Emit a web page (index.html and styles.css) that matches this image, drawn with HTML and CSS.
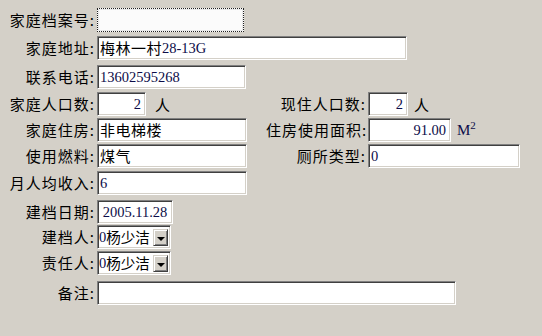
FILE: index.html
```html
<!DOCTYPE html>
<html lang="zh-CN">
<head>
<meta charset="utf-8">
<title>家庭档案</title>
<link rel="stylesheet" href="styles.css">
</head>
<body>
<div class="form">
  <div class="row r1">
    <span class="label">家庭档案号:</span>
    <span class="box focus w147"></span>
  </div>
  <div class="row r2">
    <span class="label">家庭地址:</span>
    <span class="box w309"><span class="cjk">梅林一村</span><span class="num">28-13G</span></span>
  </div>
  <div class="row r3">
    <span class="label">联系电话:</span>
    <span class="box w148"><span class="num">13602595268</span></span>
  </div>
  <div class="row r4">
    <div class="left">
      <span class="label">家庭人口数:</span>
      <span class="box w49 right-text"><span class="num">2</span></span>
      <span class="unit">人</span>
    </div>
    <span class="label rlabel">现住人口数:</span>
    <span class="box w39 right-text"><span class="num">2</span></span>
    <span class="unit unit-r">人</span>
  </div>
  <div class="row r5">
    <div class="left">
      <span class="label">家庭住房:</span>
      <span class="box w149"><span class="cjk">非电梯楼</span></span>
    </div>
    <span class="label rlabel">住房使用面积:</span>
    <span class="box w82 right-text"><span class="num">91.00</span></span>
    <span class="unit unit-r num-unit">M<sup>2</sup></span>
  </div>
  <div class="row r6">
    <div class="left">
      <span class="label">使用燃料:</span>
      <span class="box w149"><span class="cjk">煤气</span></span>
    </div>
    <span class="label rlabel">厕所类型:</span>
    <span class="box w151"><span class="num">0</span></span>
  </div>
  <div class="row r7">
    <span class="label">月人均收入:</span>
    <span class="box w149"><span class="num">6</span></span>
  </div>
  <div class="row r8">
    <span class="label">建档日期:</span>
    <span class="box w75 center-text"><span class="num">2005.11.28</span></span>
  </div>
  <div class="row r9">
    <span class="label">建档人:</span>
    <span class="box select w74"><span class="sel-text"><span class="num">0</span><span class="cjk">杨少洁</span></span><span class="sel-btn"><span class="arrow"></span></span></span>
  </div>
  <div class="row r10">
    <span class="label">责任人:</span>
    <span class="box select w74"><span class="sel-text"><span class="num">0</span><span class="cjk">杨少洁</span></span><span class="sel-btn"><span class="arrow"></span></span></span>
  </div>
  <div class="row r11">
    <span class="label">备注:</span>
    <span class="box w358"></span>
  </div>
</div>
</body>
</html>
```

FILE: styles.css
```css
html, body {
  margin: 0;
  padding: 0;
  background: #d4d0c8;
}
body {
  width: 542px;
  height: 336px;
  overflow: hidden;
  font-family: "Noto Sans CJK SC", "Liberation Serif", serif;
  font-size: 15px;
  color: #000;
}
.form {
  display: flex;
  flex-direction: column;
  padding: 8px 0 0 8px;
}
.row {
  display: flex;
  align-items: center;
  height: 24px;
}
.r2 { margin-top: 4px; }
.r3 { margin-top: 5px; }
.r4 { margin-top: 3px; }
.r5 { margin-top: 2px; }
.r6 { margin-top: 2px; }
.r7 { margin-top: 3px; }
.r8 { margin-top: 5px; }
.r9 { margin-top: 1px; }
.r10 { margin-top: 2px; }
.r11 { margin-top: 6px; }

.left {
  display: flex;
  align-items: center;
  width: 258px;
  height: 24px;
}
.label {
  width: 87px;
  margin-right: 2px;
  text-align: right;
  white-space: nowrap;
  letter-spacing: 1px;
  line-height: 20px;
  font-family: "Noto Sans CJK SC", sans-serif;
}
.rlabel {
  width: 100px;
}
.box {
  box-sizing: border-box;
  height: 24px;
  background: #fff;
  border: 1px solid;
  border-color: #808080 #ffffff #ffffff #808080;
  box-shadow: inset 1px 1px 0 #404040, inset -1px -1px 0 #d4d0c8;
  padding: 1px 3px 1px 2px;
  display: flex;
  align-items: center;
  white-space: nowrap;
  line-height: 20px;
}
.box.focus {
  border: 1px dotted #202020;
  box-shadow: inset 1px 1px 0 #e8e8e8, inset -1px -1px 0 #e8e8e8;
  background: #fbfbfb;
}
.right-text { justify-content: flex-end; padding-right: 4px; }
.center-text { justify-content: center; padding: 1px 2px; }

.cjk {
  font-family: "Noto Sans CJK SC", sans-serif;
  font-size: 15px;
  letter-spacing: 0.5px;
}
.num {
  font-family: "Liberation Serif", serif;
  font-size: 14.5px;
  color: #0c0c48;
}
.unit {
  margin-left: 9px;
  font-family: "Noto Sans CJK SC", sans-serif;
}
.unit-r { margin-left: 6px; }
.num-unit {
  font-family: "Liberation Serif", serif;
  font-size: 15px;
  color: #0c0c48;
}
.num-unit sup {
  font-size: 11px;
  vertical-align: 6px;
  line-height: 0;
}

.w39 { width: 40px; }
.w49 { width: 49px; }
.w74 { width: 74px; }
.w75 { width: 76px; }
.w82 { width: 83px; }
.w147 { width: 147px; }
.w148 { width: 149px; }
.w149 { width: 150px; }
.w151 { width: 152px; }
.w309 { width: 310px; }
.w358 { width: 359px; }

.select {
  padding: 2px 2px 2px 1px;
  justify-content: space-between;
  align-items: flex-end;
}
.sel-text {
  display: flex;
  align-items: center;
  height: 18px;
  flex: none;
}
.sel-text .cjk {
  letter-spacing: 0;
  font-size: 14.5px;
}
.sel-btn {
  flex: none;
  box-sizing: border-box;
  width: 15px;
  height: 17px;
  background: #d4d0c8;
  border: 1px solid;
  border-color: #d4d0c8 #404040 #404040 #d4d0c8;
  box-shadow: inset 1px 1px 0 #fff, inset -1px -1px 0 #808080;
  display: flex;
  align-items: center;
  justify-content: center;
}
.arrow {
  width: 0;
  height: 0;
  border-left: 4px solid transparent;
  border-right: 4px solid transparent;
  border-top: 4px solid #000;
  margin-top: 2px;
}
```
